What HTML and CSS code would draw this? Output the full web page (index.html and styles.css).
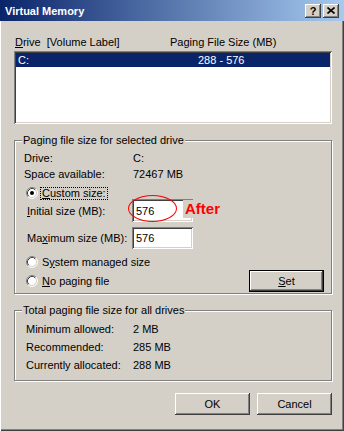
FILE: index.html
```html
<!DOCTYPE html>
<html lang="en">
<head>
    <meta charset="UTF-8">
    <title>Virtual Memory</title>
    <link rel="stylesheet" href="styles.css">
</head>
<body>
    <div class="window">
        <div class="titlebar">
            <span class="title">Virtual Memory</span>
            <span class="tb-btn">?</span>
            <span class="tb-btn">
                <svg width="8" height="7" viewBox="0 0 8 7"><path d="M0.5 0.5L7.5 6.5M7.5 0.5L0.5 6.5" stroke="#000" stroke-width="1.6"/></svg>
            </span>
        </div>

        <div class="content">
            <div class="col-heads">
                <span class="col-drive"><u>D</u>rive&nbsp; [Volume Label]</span>
                <span>Paging File Size (MB)</span>
            </div>
            <div class="listbox">
                <div class="list-row selected">
                    <span class="cell-drive">C:</span>
                    <span>288 - 576</span>
                </div>
            </div>

            <div class="group group-drive">
                <div class="legend">Paging file size for selected drive</div>
                <div class="info-row"><span class="info-label">Drive:</span><span>C:</span></div>
                <div class="info-row"><span class="info-label">Space available:</span><span>72467 MB</span></div>
                <div class="radio-row first">
                    <svg class="radio" width="12" height="12" viewBox="0 0 12 12">
                        <circle cx="6" cy="6" r="5" fill="#fff"/>
                        <path d="M2.11 9.89A5.5 5.5 0 0 1 9.89 2.11" fill="none" stroke="#808080"/>
                        <path d="M2.82 9.18A4.5 4.5 0 0 1 9.18 2.82" fill="none" stroke="#404040"/>
                        <path d="M9.89 2.11A5.5 5.5 0 0 1 2.11 9.89" fill="none" stroke="#fff"/>
                        <path d="M9.18 2.82A4.5 4.5 0 0 1 2.82 9.18" fill="none" stroke="#d4d0c8"/>
                        <circle cx="6" cy="6" r="2" fill="#000"/>
                    </svg>
                    <span class="focus"><u>C</u>ustom size:</span>
                </div>
                <div class="size-row initial">
                    <span class="size-label"><u>I</u>nitial size (MB):</span>
                    <span class="edit">576</span>
                    <span class="ellipse"></span>
                    <span class="note">After</span>
                </div>
                <div class="size-row maximum">
                    <span class="size-label">Ma<u>x</u>imum size (MB):</span>
                    <span class="edit">576</span>
                </div>
                <div class="radio-row system">
                    <svg class="radio" width="12" height="12" viewBox="0 0 12 12">
                        <circle cx="6" cy="6" r="5" fill="#fff"/>
                        <path d="M2.11 9.89A5.5 5.5 0 0 1 9.89 2.11" fill="none" stroke="#808080"/>
                        <path d="M2.82 9.18A4.5 4.5 0 0 1 9.18 2.82" fill="none" stroke="#404040"/>
                        <path d="M9.89 2.11A5.5 5.5 0 0 1 2.11 9.89" fill="none" stroke="#fff"/>
                        <path d="M9.18 2.82A4.5 4.5 0 0 1 2.82 9.18" fill="none" stroke="#d4d0c8"/>
                    </svg>
                    <span>S<u>y</u>stem managed size</span>
                </div>
                <div class="radio-row nopaging">
                    <svg class="radio" width="12" height="12" viewBox="0 0 12 12">
                        <circle cx="6" cy="6" r="5" fill="#fff"/>
                        <path d="M2.11 9.89A5.5 5.5 0 0 1 9.89 2.11" fill="none" stroke="#808080"/>
                        <path d="M2.82 9.18A4.5 4.5 0 0 1 9.18 2.82" fill="none" stroke="#404040"/>
                        <path d="M9.89 2.11A5.5 5.5 0 0 1 2.11 9.89" fill="none" stroke="#fff"/>
                        <path d="M9.18 2.82A4.5 4.5 0 0 1 2.82 9.18" fill="none" stroke="#d4d0c8"/>
                    </svg>
                    <span><u>N</u>o paging file</span>
                    <button class="btn btn-default"><u>S</u>et</button>
                </div>
            </div>

            <div class="group group-total">
                <div class="legend">Total paging file size for all drives</div>
                <div class="total-row"><span class="total-label">Minimum allowed:</span><span>2 MB</span></div>
                <div class="total-row"><span class="total-label">Recommended:</span><span>285 MB</span></div>
                <div class="total-row"><span class="total-label">Currently allocated:</span><span>288 MB</span></div>
            </div>

            <div class="dialog-buttons">
                <button class="btn">OK</button>
                <button class="btn">Cancel</button>
            </div>
        </div>
    </div>
</body>
</html>
```

FILE: styles.css
```css
body {
    margin: 0;
    font-family: "Liberation Sans", Arial, sans-serif;
    font-size: 11px;
    color: #000;
    background: #d4d0c8;
}
.window {
    width: 344px;
    height: 431px;
    box-sizing: border-box;
    background: #d4d0c8;
    box-shadow: inset 1px 0 #fff, inset -1px -1px #404040, inset -2px -2px #808080;
}
.titlebar {
    height: 21px;
    display: flex;
    align-items: center;
    padding: 0 5px 0 5px;
    background: linear-gradient(to right, #0a246a, #a6caf0);
    color: #fff;
    font-weight: bold;
}
.title { flex: 1; }
.tb-btn {
    width: 16px;
    height: 14px;
    margin-left: 2px;
    display: flex;
    align-items: center;
    justify-content: center;
    background: #d4d0c8;
    color: #000;
    font-size: 11px;
    box-shadow: inset -1px -1px #404040, inset 1px 1px #fff, inset -2px -2px #808080;
}
.content {
    padding: 0 12px 0 14px;
}
.col-heads {
    margin-top: 15px;
    height: 12px;
    line-height: 12px;
    display: flex;
    padding-left: 1px;
}
.col-drive { width: 155px; }
.listbox {
    margin-top: 3px;
    height: 73px;
    padding: 2px;
    box-sizing: border-box;
    background: #fff;
    box-shadow: inset 1px 1px #808080, inset -1px -1px #fff, inset 2px 2px #404040, inset -2px -2px #d4d0c8;
}
.list-row {
    height: 14px;
    line-height: 14px;
    display: flex;
    padding-left: 2px;
}
.list-row.selected {
    background: #0a246a;
    color: #fff;
}
.cell-drive { width: 180px; }
.group {
    position: relative;
    margin-top: 16px;
    border: 1px solid #808080;
    box-shadow: inset 1px 1px #fff, 1px 1px #fff;
}
.legend {
    width: fit-content;
    height: 13px;
    line-height: 13px;
    margin: -7px 0 0 7px;
    padding: 0 1px;
    background: #d4d0c8;
}
.group-drive { padding-bottom: 1px; }
.info-row {
    height: 16px;
    display: flex;
    align-items: center;
    padding-left: 9px;
}
.legend + .info-row { margin-top: 3px; }
.info-label { width: 109px; }
.radio-row {
    height: 16px;
    display: flex;
    align-items: center;
    padding-left: 11px;
}
.radio-row.first { margin-top: 3px; }
.radio-row.system { margin-top: 5px; }
.radio-row.nopaging { height: 22px; }
.radio { margin-right: 4px; }
.focus {
    margin-left: -2px;
    padding: 0 1px;
    border: 1px dotted #000;
    line-height: 11px;
}
.size-row {
    position: relative;
    display: flex;
    align-items: center;
    padding-left: 12px;
}
.size-row.initial { height: 23px; margin-top: -2px; }
.size-row.maximum { height: 22px; margin-top: 5px; }
.size-label { width: 105px; }
.edit {
    width: 61px;
    height: 100%;
    box-sizing: border-box;
    padding: 0 4px;
    display: flex;
    align-items: center;
    background: #fff;
    box-shadow: inset 1px 1px #808080, inset -1px -1px #fff, inset 2px 2px #404040, inset -2px -2px #d4d0c8;
}
/* hand-drawn annotation pasted over the dialog */
.ellipse {
    position: absolute;
    left: 113px;
    top: -4px;
    width: 47px;
    height: 25px;
    border: 1px solid #f00;
    border-radius: 50%;
}
.note {
    position: absolute;
    left: 168px;
    top: 1px;
    padding: 0 2px;
    line-height: 18px;
    background: #d4d0c8;
    color: #f00;
    font-size: 15px;
    font-weight: bold;
}
.btn {
    width: 75px;
    height: 22px;
    padding: 0;
    border: none;
    background: #d4d0c8;
    font-family: inherit;
    font-size: 11px;
    color: #000;
    box-shadow: inset -1px -1px #404040, inset 1px 1px #fff, inset -2px -2px #808080;
}
.btn-default {
    margin-left: auto;
    margin-right: 7px;
    border: 1px solid #000;
}
.group-total {
    padding-bottom: 6px;
}
.total-row {
    height: 18px;
    display: flex;
    align-items: center;
    padding-left: 11px;
}
.legend + .total-row { margin-top: 3px; }
.total-label { width: 107px; }
.dialog-buttons {
    margin-top: 12px;
    display: flex;
    justify-content: flex-end;
    gap: 7px;
}
```
